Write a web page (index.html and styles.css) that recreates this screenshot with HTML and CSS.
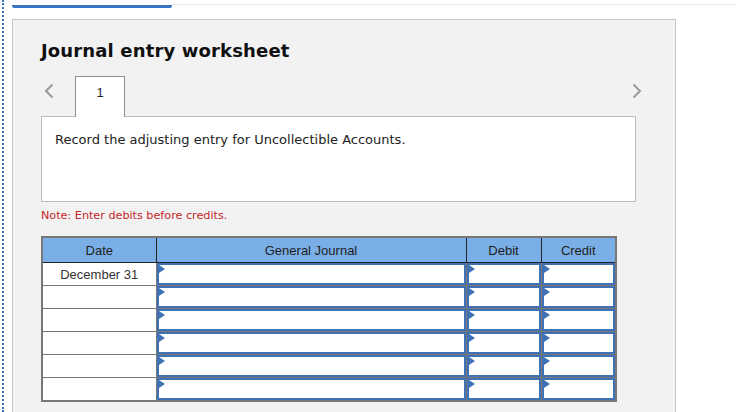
FILE: index.html
```html
<!DOCTYPE html>
<html>
<head>
<meta charset="utf-8">
<link rel="stylesheet" href="styles.css">
</head>
<body>
<div class="page">
  <div class="topbar">
    <div class="bar"></div>
    <div class="rule"></div>
  </div>
  <div class="panel">
    <h1 class="title">Journal entry worksheet</h1>
    <div class="tabrow">
      <svg class="chev" width="12" height="16" viewBox="0 0 12 16"><path d="M9.5 1.5 L3 8 L9.5 14.5" fill="none" stroke="#9a9a9a" stroke-width="2"/></svg>
      <div class="tab">1</div>
      <div class="spacer"></div>
      <svg class="chev chev-r" width="12" height="16" viewBox="0 0 12 16"><path d="M2.5 1.5 L9 8 L2.5 14.5" fill="none" stroke="#9a9a9a" stroke-width="2"/></svg>
    </div>
    <div class="box">Record the adjusting entry for Uncollectible Accounts.</div>
    <p class="note">Note: Enter debits before credits.</p>
    <table class="journal">
      <colgroup><col class="c-date"><col class="c-gj"><col class="c-amt"><col class="c-amt"></colgroup>
      <thead>
        <tr><th>Date</th><th>General Journal</th><th>Debit</th><th>Credit</th></tr>
      </thead>
      <tbody>
        <tr><td class="date">December 31</td><td><div class="inp"></div></td><td><div class="inp"></div></td><td><div class="inp"></div></td></tr>
        <tr><td class="date"></td><td><div class="inp"></div></td><td><div class="inp"></div></td><td><div class="inp"></div></td></tr>
        <tr><td class="date"></td><td><div class="inp"></div></td><td><div class="inp"></div></td><td><div class="inp"></div></td></tr>
        <tr><td class="date"></td><td><div class="inp"></div></td><td><div class="inp"></div></td><td><div class="inp"></div></td></tr>
        <tr><td class="date"></td><td><div class="inp"></div></td><td><div class="inp"></div></td><td><div class="inp"></div></td></tr>
        <tr><td class="date"></td><td><div class="inp"></div></td><td><div class="inp"></div></td><td><div class="inp"></div></td></tr>
      </tbody>
    </table>
  </div>
</div>
</body>
</html>
```

FILE: styles.css
```css
html, body {
  margin: 0;
  padding: 0;
  background: #ffffff;
  overflow: hidden;
}
.page {
  margin-left: 2px;
  border-left: 2px dotted #3b74c2;
  padding-left: 8px;
  height: 412px;
  box-sizing: border-box;
  overflow: hidden;
}
.topbar {
  display: flex;
  align-items: flex-start;
  height: 19px;
}
.bar {
  width: 160px;
  height: 3px;
  margin-top: 5px;
  background: #3a75c4;
  border-radius: 0 0 2px 2px;
}
.rule {
  flex: 1;
  margin-top: 4px;
  border-top: 1px solid #e6e6e6;
}
.panel {
  width: 664px;
  height: 420px;
  border: 1px solid #c6c6c6;
  background: #f2f2f2;
  padding: 0 0 0 28px;
  box-sizing: border-box;
}
.title {
  margin: 20px 0 0 0;
  font-family: "DejaVu Sans", Verdana, sans-serif;
  font-weight: bold;
  font-size: 18px;
  letter-spacing: 0.15px;
  line-height: 22px;
  color: #111;
}
.tabrow {
  display: flex;
  align-items: flex-start;
  margin-top: 14px;
  width: 602px;
  height: 41px;
}
.chev {
  margin: 7px 0 0 2px;
}
.tab {
  margin-left: 20px;
  width: 50px;
  height: 41px;
  box-sizing: border-box;
  border: 1px solid #8c8c8c;
  border-bottom: none;
  background: #fff;
  position: relative;
  z-index: 1;
  text-align: center;
  font-family: "Liberation Sans", Arial, sans-serif;
  font-size: 13px;
  line-height: 32px;
  color: #222;
}
.spacer { flex: 1; }
.chev-r { margin: 7px 0 0 0; }
.box {
  width: 595px;
  height: 86px;
  margin-top: -1px;
  box-sizing: border-box;
  border: 1px solid #bdbdbd;
  background: #fff;
  padding: 14px 0 0 13px;
  font-family: "DejaVu Sans", Verdana, sans-serif;
  font-size: 13px;
  line-height: 17px;
  color: #222;
}
.note {
  margin: 6px 0 0 0;
  font-family: "DejaVu Sans", Verdana, sans-serif;
  font-size: 11.2px;
  line-height: 16px;
  color: #c3272b;
}
.journal {
  margin-top: 12px;
  border-collapse: collapse;
  table-layout: fixed;
  border: 2px solid #777;
  width: 576px;
  font-family: "Liberation Sans", Arial, sans-serif;
  font-size: 13px;
  color: #333;
}
.c-date { width: 114px; }
.c-gj { width: 310px; }
.c-amt { width: 75px; }
.journal th {
  background: #7aaee6;
  height: 24px;
  padding: 0;
  font-weight: normal;
  color: #1e1e1e;
  border-left: 1px solid #222;
  border-bottom: 1px solid #222;
  text-align: center;
}
.journal th:first-child { border-left: none; }
.journal td {
  height: 22px;
  padding: 0;
  border: 1px solid #777;
  background: #fff;
}
.journal td.date {
  text-align: center;
  color: #333;
}
.inp {
  position: relative;
  height: 22px;
  box-sizing: border-box;
  border: 2px solid #3f72b5;
}
.inp::before {
  content: "";
  position: absolute;
  left: 0;
  top: 0;
  width: 0;
  height: 0;
  border-top: 4px solid transparent;
  border-bottom: 4px solid transparent;
  border-left: 6px solid #3f72b5;
}
```
